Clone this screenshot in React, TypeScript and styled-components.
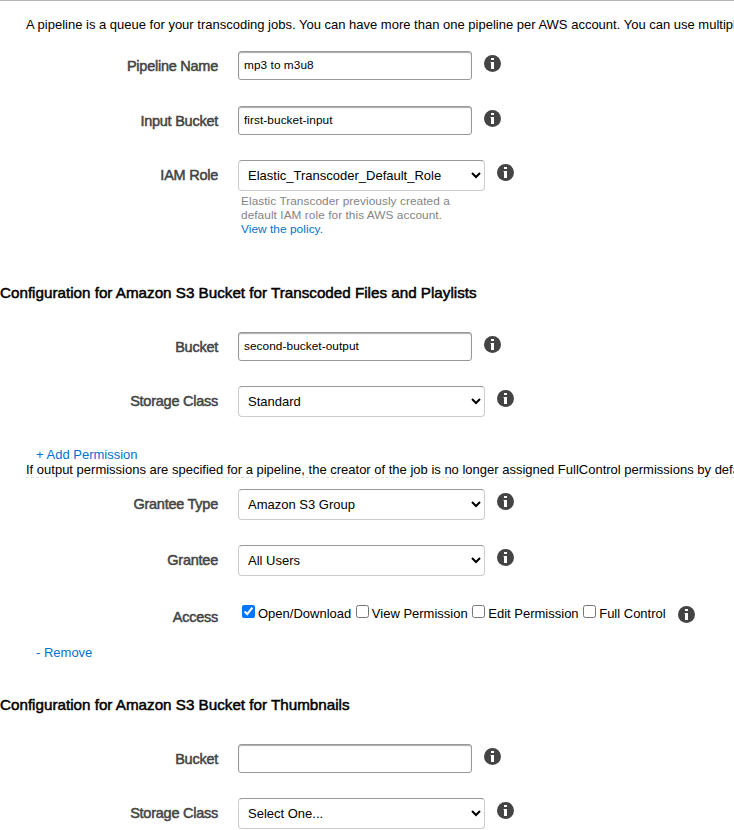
import React from "react";
import styled, { createGlobalStyle } from "styled-components";

const GlobalStyle = createGlobalStyle`
  body {
    margin: 0;
    background: #fff;
    color: #000;
    font: 13px/15px "Liberation Sans", Arial, sans-serif;
  }
`;

const Page = styled.main`
  box-sizing: border-box;
  width: 100%;
  height: 830px;
  overflow: hidden;
  border-top: 1px solid #b4b4b4;
`;

const Intro = styled.p`
  margin: 16px 0 19px 26px;
  white-space: nowrap;
`;

const Row = styled.div<{ $gap?: number }>`
  display: flex;
  align-items: flex-start;
  margin-bottom: ${(p) => p.$gap ?? 0}px;
`;

const Label = styled.label`
  flex: none;
  width: 218px;
  height: 29px;
  margin-right: 20px;
  text-align: right;
  font-size: 14.5px;
  letter-spacing: -0.25px;
  line-height: 30px;
  color: #444;
  -webkit-text-stroke: 0.5px #444;
`;

const TextInput = styled.input`
  box-sizing: border-box;
  width: 234px;
  height: 29px;
  padding: 0 5px 2px;
  border: 1px solid #999;
  border-radius: 3px;
  box-shadow: inset 0 1px 1px #aaa;
  background: #fff;
  color: #000;
  font: 11.83px "Liberation Sans", Arial, sans-serif;
  letter-spacing: 0.06px;
  outline: none;
`;

const Select = styled.select`
  box-sizing: border-box;
  width: 247px;
  height: 31px;
  padding: 0 5px;
  border: 1px solid #ccc;
  border-top-color: #999;
  border-radius: 4px;
  background-color: #fff;
  color: #000;
  font: 13px "Liberation Sans", Arial, sans-serif;
`;

const InfoSvg = styled.svg`
  flex: none;
  display: block;
  width: 17px;
  height: 17px;
  margin: 4px 0 0 12px;
`;

const Hint = styled.p`
  margin: 3px 0 0 3px;
  font-size: 11.83px;
  letter-spacing: 0.06px;
  line-height: 14px;
  color: #848484;
`;

const Link = styled.a`
  color: #0073cf;
  text-decoration: none;
`;

const Heading = styled.h2`
  margin: 0;
  height: 18px;
  font-size: 15.21px;
  font-weight: 400;
  line-height: 18px;
  -webkit-text-stroke: 0.5px #000;
`;

const SectionTitle = styled.div<{ $before: number }>`
  padding: ${(p) => p.$before}px 0 30px;
`;

const ActionLine = styled.div`
  padding-left: 36px;
`;

const Notice = styled.p`
  margin: 0 0 11px 26px;
  height: 16px;
  box-sizing: border-box;
  border-bottom: 1px dashed #e2e2e2;
  white-space: nowrap;
`;

const Choices = styled.div`
  display: flex;
  padding-left: 4px;
  margin-top: 3px;
`;

const Choice = styled.label`
  display: flex;
  align-items: flex-start;
  line-height: 17px;
  margin-right: 4.6px;
  white-space: nowrap;

  &:last-child {
    margin-right: 0.4px;
  }
`;

const Checkbox = styled.input`
  width: 13px;
  height: 13px;
  margin: 0 3px 0 0;
`;

const Info = () => (
  <InfoSvg viewBox="0 0 17 17" aria-label="Info">
    <circle cx="8.5" cy="8.5" r="8.5" fill="#444" />
    <path d="M7 3h3v2H7zM7 7h3v7H7z" fill="#fff" />
    <path d="M6 7h1v1H6z" fill="#fff" opacity="0.4" />
  </InfoSvg>
);

const TextField = ({ label, value, gap }: { label: string; value: string; gap: number }) => (
  <Row $gap={gap}>
    <Label>{label}</Label>
    <TextInput defaultValue={value} />
    <Info />
  </Row>
);

const SelectField = ({
  label,
  value,
  gap,
  children,
}: {
  label: string;
  value: string;
  gap?: number;
  children?: React.ReactNode;
}) => (
  <Row $gap={gap}>
    <Label>{label}</Label>
    <div>
      <Row>
        <Select defaultValue={value}>
          <option>{value}</option>
        </Select>
        <Info />
      </Row>
      {children}
    </div>
  </Row>
);

const permissions = ["Open/Download", "View Permission", "Edit Permission", "Full Control"];

export default function App() {
  return (
    <Page>
      <GlobalStyle />
      <Intro>
        A pipeline is a queue for your transcoding jobs. You can have more than one pipeline per AWS
        account. You can use multiple pipelines
      </Intro>
      <TextField label="Pipeline Name" value="mp3 to m3u8" gap={26} />
      <TextField label="Input Bucket" value="first-bucket-input" gap={25} />
      <SelectField label="IAM Role" value="Elastic_Transcoder_Default_Role">
        <Hint>
          Elastic Transcoder previously created a
          <br />
          default IAM role for this AWS account.
          <br />
          <Link>View the policy.</Link>
        </Hint>
      </SelectField>

      <SectionTitle $before={48}>
        <Heading>Configuration for Amazon S3 Bucket for Transcoded Files and Playlists</Heading>
      </SectionTitle>
      <TextField label="Bucket" value="second-bucket-output" gap={25} />
      <SelectField label="Storage Class" value="Standard" gap={30} />

      <ActionLine>
        <Link>+ Add Permission</Link>
      </ActionLine>
      <Notice>
        If output permissions are specified for a pipeline, the creator of the job is no longer
        assigned FullControl permissions by default
      </Notice>
      <SelectField label="Grantee Type" value="Amazon S3 Group" gap={25} />
      <SelectField label="Grantee" value="All Users" gap={26} />
      <Row $gap={14}>
        <Label>Access</Label>
        <Choices>
          {permissions.map((name, i) => (
            <Choice key={name}>
              <Checkbox type="checkbox" defaultChecked={i === 0} />
              {name}
            </Choice>
          ))}
        </Choices>
        <Info />
      </Row>
      <ActionLine>
        <Link>- Remove</Link>
      </ActionLine>

      <SectionTitle $before={36}>
        <Heading>Configuration for Amazon S3 Bucket for Thumbnails</Heading>
      </SectionTitle>
      <TextField label="Bucket" value="" gap={25} />
      <SelectField label="Storage Class" value="Select One..." />
    </Page>
  );
}
